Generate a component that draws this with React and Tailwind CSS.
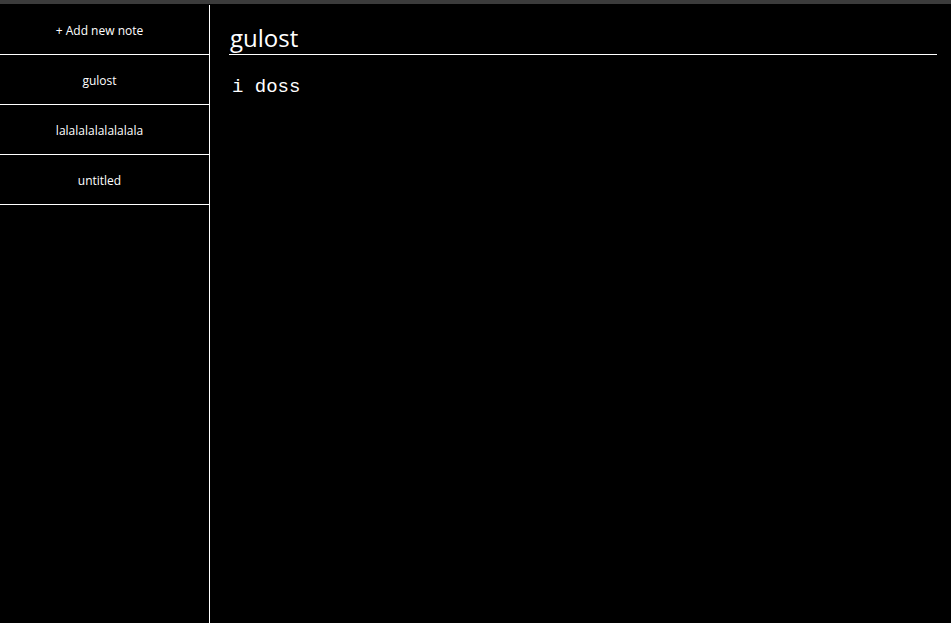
export default function App() {
  const notes = ["gulost", "lalalalalalalalala", "untitled"]

  return (
    <div className="h-[623px] w-full bg-black flex flex-col overflow-hidden" style={{ fontFamily: '"Open Sans", "DejaVu Sans", sans-serif' }}>
      {/* top strip */}
      <div className="h-[4px] bg-[#3b3b3b] shrink-0" />
      <div className="flex flex-1 mt-[1px] min-h-0">
        {/* sidebar */}
        <div className="w-[210px] shrink-0 border-r border-white flex flex-col">
          <button className="h-[50px] border-b border-white text-white text-[12px] flex items-center justify-center pr-[10px] pt-[2px]">
            + Add new note
          </button>
          {notes.map((n) => (
            <div
              key={n}
              className="h-[50px] border-b border-white text-white text-[12px] flex items-center justify-center pr-[10px] pt-[2px]"
            >
              {n}
            </div>
          ))}
        </div>

        {/* editor */}
        <div className="flex-1 pl-[19px] pr-[14px] flex flex-col">
          <div className="h-[50px] border-b border-white text-white text-[24px] leading-none flex items-end pb-[4px] pl-[1px]">
            gulost
          </div>
          <div
            className="text-white text-[19px] pt-[18px] pl-[3px]"
            style={{ fontFamily: '"Liberation Mono", monospace' }}
          >
            i doss
          </div>
        </div>
      </div>
    </div>
  )
}
